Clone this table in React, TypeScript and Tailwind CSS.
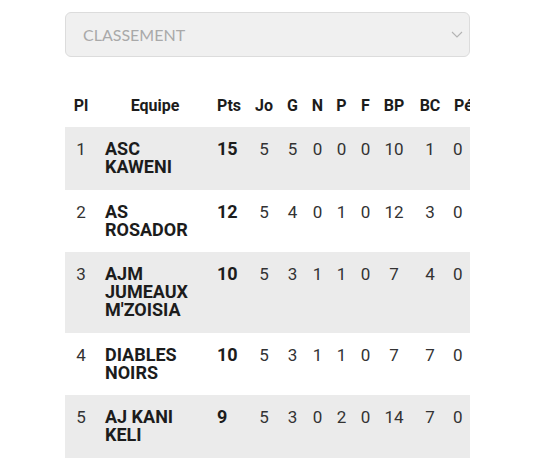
import React from "react";

type Row = {
  pl: number;
  equipe: string;
  stats: [number, number, number, number, number, number, number, number, number];
};

const rows: Row[] = [
  { pl: 1, equipe: "ASC KAWENI", stats: [15, 5, 5, 0, 0, 0, 10, 1, 0] },
  { pl: 2, equipe: "AS ROSADOR", stats: [12, 5, 4, 0, 1, 0, 12, 3, 0] },
  { pl: 3, equipe: "AJM JUMEAUX M'ZOISIA", stats: [10, 5, 3, 1, 1, 0, 7, 4, 0] },
  { pl: 4, equipe: "DIABLES NOIRS", stats: [10, 5, 3, 1, 1, 0, 7, 7, 0] },
  { pl: 5, equipe: "AJ KANI KELI", stats: [9, 5, 3, 0, 2, 0, 14, 7, 0] },
];

const cols = [
  { label: "Jo", w: "w-[30px]" },
  { label: "G", w: "w-[27px]" },
  { label: "N", w: "w-[23px]" },
  { label: "P", w: "w-[25px]" },
  { label: "F", w: "w-[23px]" },
  { label: "BP", w: "w-[34px]" },
  { label: "BC", w: "w-[38px]" },
];

export default function App() {
  return (
    <div className="min-h-screen bg-white pt-[12px]">
      <div className="ml-[65px] w-[405px]">
        <div className="flex h-[45px] items-center justify-between rounded-[6px] border border-[#dcdcdc] bg-[#f0f0f0] pl-[17px] pr-[6px]">
          <span className="text-[16px] text-[#a9a9a9] [font-family:Lato,'Open_Sans',sans-serif]">
            CLASSEMENT
          </span>
          <svg width="12" height="7" viewBox="0 0 12 7" fill="none">
            <path d="M1 1l5 5 5-5" stroke="#b3b3b3" strokeWidth="1.1" />
          </svg>
        </div>

        <div className="mt-[28px] overflow-hidden">
          <table className="w-[414px] table-fixed border-collapse text-[17px] leading-[18px] text-[#333333] [font-family:Roboto,'Liberation_Sans',sans-serif]">
            <colgroup>
              <col className="w-[32px]" />
              <col className="w-[116px]" />
              <col className="w-[36px]" />
              {cols.map((c) => (
                <col key={c.label} className={c.w} />
              ))}
              <col className="w-[30px]" />
            </colgroup>
            <thead>
              <tr className="text-[16px] text-[#1c1c1c]">
                <th className="pt-[12px] pb-[12px] text-center font-bold">Pl</th>
                <th className="text-center font-bold">Equipe</th>
                <th className="pl-[4px] text-left font-bold">Pts</th>
                {cols.map((c) => (
                  <th key={c.label} className="text-center font-bold">
                    {c.label}
                  </th>
                ))}
                <th className="whitespace-nowrap pl-[5px] text-left font-bold">Pé</th>
              </tr>
            </thead>
            <tbody>
              {rows.map((r, i) => (
                <tr key={r.pl} className={i % 2 === 0 ? "bg-[#ebebeb]" : "bg-white"}>
                  <td className="pt-[13px] pb-[13.5px] text-center align-top">{r.pl}</td>
                  <td className="pt-[13px] pb-[13.5px] pl-[8px] pr-[12px] align-top text-[18px] font-bold text-[#1c1c1c]">
                    {r.equipe}
                  </td>
                  <td className="pt-[13px] pl-[4px] align-top text-[18px] font-bold text-[#1c1c1c]">
                    {r.stats[0]}
                  </td>
                  {r.stats.slice(1, 8).map((v, j) => (
                    <td key={j} className="pt-[13px] text-center align-top">
                      {v}
                    </td>
                  ))}
                  <td className="pt-[13px] pl-[4px] text-left align-top">{r.stats[8]}</td>
                </tr>
              ))}
            </tbody>
          </table>
        </div>
      </div>
    </div>
  );
}
